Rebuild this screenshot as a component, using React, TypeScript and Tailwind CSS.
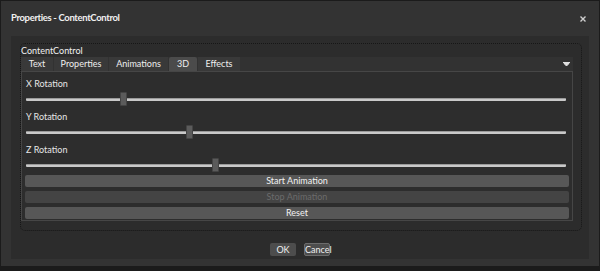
import { useState } from "react"

const font = { fontFamily: 'Lato, "Open Sans", sans-serif' }

const tabs = [
  { name: "Text", w: "w-[32px]" },
  { name: "Properties", w: "w-[54px]" },
  { name: "Animations", w: "w-[59px]" },
  { name: "3D", w: "w-[28px]" },
  { name: "Effects", w: "w-[42px]" },
]

function Slider({ label, pos }: { label: string; pos: number }) {
  return (
    <div className="px-[1px]">
      <div className="h-[13px] text-[9px] leading-[13px] text-[#e6e6e6]">{label}</div>
      <div className="relative h-[20px]">
        <div className="absolute left-0 right-[2px] top-[8px] h-[3px] rounded-[1px] bg-[#c9c9c9] border-t border-[#9a9a9a]" />
        <div
          className="absolute top-[2px] h-[14px] w-[7px] rounded-[1px] bg-[#5b5b5b] border border-[#444]"
          style={{ left: pos }}
        />
      </div>
    </div>
  )
}

export default function App() {
  const [tab, setTab] = useState("3D")

  return (
    <div className="w-[600px] h-[271px] bg-[#1b1b1b] px-[1px] pt-[1px] pb-[5px]" style={font}>
      <div className="h-full bg-[#333333] flex flex-col">
        {/* title bar */}
        <div className="h-[35px] flex items-center justify-between pl-[10px] pr-[13px]">
          <span className="text-[9.5px] font-bold tracking-[-0.35px] text-[#f0f0f0]">Properties - ContentControl</span>
          <svg width="6" height="6" viewBox="0 0 6 6">
            <path d="M0.5 0.5 L5.5 5.5 M5.5 0.5 L0.5 5.5" stroke="#cfcfcf" strokeWidth="1.4" />
          </svg>
        </div>

        {/* body */}
        <div className="mx-[10px] h-[223px] bg-[#2c2c2c] flex flex-col">
          <div className="mt-[7px] ml-[9px] mr-[7px] h-[188px] rounded-[5px] border border-dotted border-[#161616] pr-[8px]">
            <div className="h-[13px] text-[9px] leading-[13px] text-[#f0f0f0]">ContentControl</div>
            <div className="h-[14px] bg-[#323232] flex items-stretch">
              {tabs.map((t) => (
                <button
                  key={t.name}
                  onClick={() => setTab(t.name)}
                  className={
                    t.w +
                    " mr-px text-[9px] leading-[14px] text-[#eeeeee] " +
                    (t.name === tab ? "bg-[#4b4b4b] rounded-t-[2px]" : "bg-[#393939]")
                  }
                >
                  {t.name}
                </button>
              ))}
              <div className="flex-1 flex items-center justify-end pr-[3px]">
                <svg width="7" height="5" viewBox="0 0 7 5">
                  <path d="M0 0.5 H7 M1 1.5 H6 L3.5 4 Z" stroke="#e0e0e0" strokeWidth="1" fill="#e0e0e0" />
                </svg>
              </div>
            </div>
            <div className="h-[150px] bg-[#2d2d2d] border border-[#464646] px-[3px] pt-[5px]">
              <Slider label="X Rotation" pos={94} />
              <Slider label="Y Rotation" pos={160} />
              <Slider label="Z Rotation" pos={186} />
              <div className="flex flex-col gap-[4px] -mt-px">
                <button className="h-[12px] rounded-[2px] bg-[#575757] text-[9px] leading-[12px] text-[#f2f2f2]">
                  Start Animation
                </button>
                <button disabled className="h-[12px] rounded-[2px] bg-[#444444] text-[9px] leading-[12px] text-[#6b6b6b]">
                  Stop Animation
                </button>
                <button className="h-[12px] rounded-[2px] bg-[#575757] text-[9px] leading-[12px] text-[#f2f2f2]">
                  Reset
                </button>
              </div>
            </div>
          </div>
          <div className="flex justify-center gap-[8px] mt-[12px]">
            <button className="w-[26px] h-[13px] rounded-[2px] bg-[#4d4d4d] text-[9px] leading-[13px] text-[#f0f0f0]">OK</button>
            <button className="w-[26px] h-[13px] rounded-[2px] bg-[#4d4d4d] border border-[#6c6c6c] text-[9px] leading-[11px] text-[#f0f0f0]">
              Cancel
            </button>
          </div>
        </div>
      </div>
    </div>
  )
}
